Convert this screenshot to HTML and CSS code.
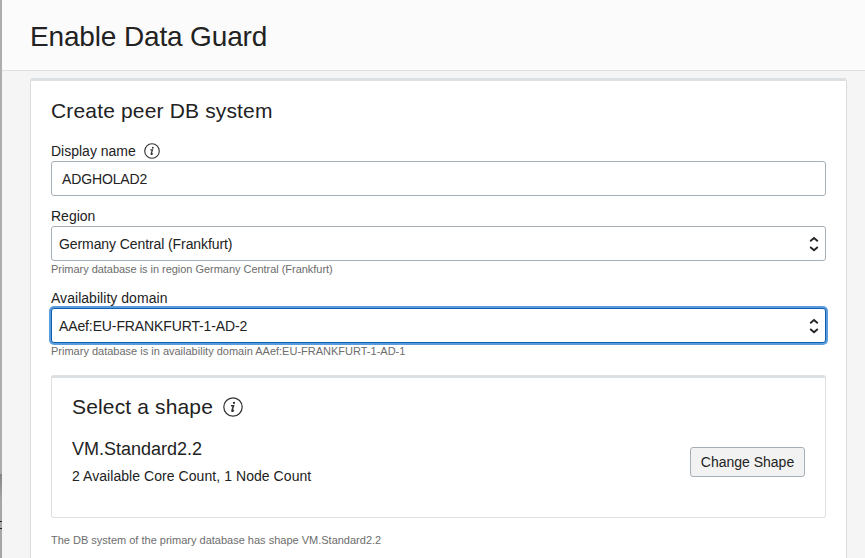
FILE: index.html
```html
<!DOCTYPE html>
<html lang="en">
<head>
<meta charset="utf-8">
<title>Enable Data Guard</title>
<link rel="stylesheet" href="styles.css">
</head>
<body>
<div class="page">
<div class="edge"></div>
<div class="drawer">
  <header class="header"><h1>Enable Data Guard</h1></header>
  <main class="card">
    <h2>Create peer DB system</h2>
    <div class="label name-label"><span>Display name</span>
      <svg class="info" viewBox="0 0 20 20"><circle cx="10" cy="10" r="9.1"/><path class="stem" d="M8 8.700h2.500L9 13.600q-.2 1 .6.600l1.300-1"/><circle class="dot" cx="11" cy="5.900" r="1.150"/></svg>
    </div>
    <div class="field text">ADGHOLAD2</div>
    <div class="label region-label">Region</div>
    <div class="field"><span class="region-value">Germany Central (Frankfurt)</span>
      <svg class="arrows" viewBox="0 0 10 16"><path d="M1.200 5.300 5 2 8.800 5.300M1.200 11 5 14.300 8.800 11"/></svg></div>
    <p class="hint region-hint">Primary database is in region Germany Central (Frankfurt)</p>
    <div class="label domain-label">Availability domain</div>
    <div class="field focused"><span class="domain-value">AAef:EU-FRANKFURT-1-AD-2</span>
      <svg class="arrows" viewBox="0 0 10 16"><path d="M1.200 5.300 5 2 8.800 5.300M1.200 11 5 14.300 8.800 11"/></svg></div>
    <p class="hint">Primary database is in availability domain AAef:EU-FRANKFURT-1-AD-1</p>
    <section class="shape">
      <div class="shape-title"><h3>Select a shape</h3>
        <svg class="info" viewBox="0 0 20 20"><circle cx="10" cy="10" r="9.2"/><path class="stem" d="M8 8.700h2.500L9 13.600q-.2 1 .6.600l1.300-1"/><circle class="dot" cx="11" cy="5.900" r="1.150"/></svg></div>
      <div class="shape-row">
        <div><div class="shape-name">VM.Standard2.2</div><div class="shape-desc">2 Available Core Count, 1 Node Count</div></div>
        <button type="button">Change Shape</button>
      </div>
    </section>
    <p class="hint last">The DB system of the primary database has shape VM.Standard2.2</p>
  </main>
</div>
</div>
</body>
</html>
```
FILE: styles.css
```css
* { box-sizing: border-box; }
body { margin: 0; height: 558px; overflow: hidden; background: #f5f5f5; color: #222; font: 14px/18px "Liberation Sans", Arial, sans-serif; }
h1, h2, h3, p { margin: 0; font-weight: 400; }
.page { display: flex; height: 558px; }
.edge { width: 2px; flex: none; background: linear-gradient(#adadad 474px, #858585 474px, #a6a6a6 500px, #a6a6a6 521px, #222 521px, #222 522px, #a6a6a6 522px, #a6a6a6 528px, #222 528px, #222 529px, #a6a6a6 529px); }
.drawer { flex: 1; overflow: hidden; }
.header { height: 71px; padding: 21px 28px 0; background: #fbfbfb; border-bottom: 1px solid #dedede; }
h1 { font-size: 28px; line-height: 32px; letter-spacing: -.15px; }
.card { width: 817px; height: 500px; margin: 7px 0 0 28px; padding: 17px 20px 0; background: #fff; border: 1px solid #d9dcdf; border-top: 3px solid #dce0e3; border-radius: 3px 3px 0 0; }
h2 { font-size: 21px; line-height: 26px; letter-spacing: .16px; }
.label { height: 18px; }
.name-label { display: flex; align-items: center; gap: 8px; margin-top: 18px; margin-bottom: 1px; }
.region-label { margin-top: 11px; margin-bottom: 1px; }
.domain-label { margin-top: 12px; margin-bottom: 1px; letter-spacing: .04px; }
.info { width: 16px; height: 16px; fill: none; stroke: #333; stroke-width: 1.4; }
.info .stem { stroke-width: 1.6; }
.info .dot { fill: #333; stroke: none; }
.field { display: flex; align-items: center; justify-content: space-between; height: 35px; padding: 0 6px 0 7px; background: #fff; border: 1px solid #a6aeb6; border-radius: 3px; }
.field.text { padding-left: 10px; letter-spacing: -.14px; }
.region-value { letter-spacing: -.09px; }
.domain-value { letter-spacing: -.12px; }
.focused { border-color: #0b5fb5; box-shadow: 0 0 0 2px #5c9cdb; }
.arrows { width: 10px; height: 16px; fill: none; stroke: #222; stroke-width: 1.8; }
.hint { height: 15px; font-size: 11px; line-height: 15px; color: #6d6d6d; margin-top: 1px; }
.region-hint { letter-spacing: -.035px; }
.shape { height: 143px; margin-top: 16px; padding: 16px 20px 0; border: 1px solid #dce0e3; border-top-width: 3px; border-radius: 3px; }
.shape-title { display: flex; align-items: center; gap: 10px; height: 26px; }
h3 { font-size: 21px; line-height: 26px; letter-spacing: .15px; }
.shape-title .info { width: 20px; height: 20px; stroke-width: 1.2; }
.shape-row { display: flex; justify-content: space-between; align-items: center; margin-top: 18px; }
.shape-name { font-size: 18px; line-height: 22px; }
.shape-desc { line-height: 18px; margin-top: 7px; letter-spacing: .06px; }
button { width: 115px; height: 30px; padding: 0; background: #f2f2f2; color: #222; border: 1px solid #a6aeb6; border-radius: 3px; font: inherit; white-space: nowrap; }
.last { margin-top: 15px; }
```
